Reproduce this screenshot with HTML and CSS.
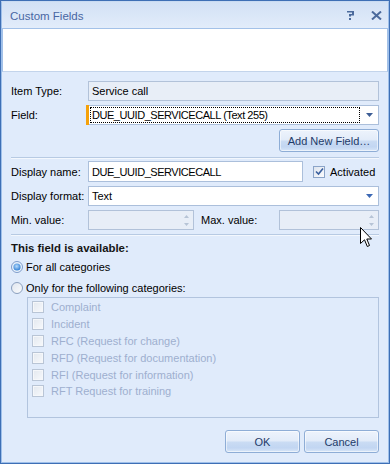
FILE: index.html
```html
<!DOCTYPE html>
<html>
<head>
<meta charset="utf-8">
<link rel="stylesheet" href="styles.css">
</head>
<body>
<div class="window">
  <div class="frame">
    <div class="titlebar">
      <span class="title">Custom Fields</span>
      <div class="title-icons">
        <svg class="help-ico" width="8" height="9" viewBox="0 0 8 9"><path fill="#4b6a9c" d="M0 0h7v1.5H0z M5 0h2v4H5z M2 3h5v1.5H2z M2 3h2v2.5H2z M2 7h2v2H2z"/></svg>
        <svg class="close-ico" width="11" height="9" viewBox="0 0 11 9"><path stroke="#4b6a9c" stroke-width="2" fill="none" d="M1 0.5 L10 8.5 M10 0.5 L1 8.5"/></svg>
      </div>
    </div>
    <div class="banner"></div>
    <div class="content">
      <div class="row">
        <span class="lbl">Item Type:</span>
        <div class="input disabled">Service call</div>
      </div>
      <div class="row gap4">
        <span class="lbl">Field:</span>
        <div class="combo field-combo">
          <span class="focus caps">DUE_UUID_SERVICECALL (Text 255)</span>
          <span class="drop"><svg width="7" height="4" viewBox="0 0 7 4"><path d="M0 0h7L3.5 4z" fill="#3d5d95"/></svg></span>
        </div>
      </div>
      <div class="btn-row">
        <button class="btn add-btn">Add New Field…</button>
      </div>
      <div class="sep sep1"></div>
      <div class="row dn-row">
        <span class="lbl">Display name:</span>
        <div class="input dn-input caps">DUE_UUID_SERVICECALL</div>
        <span class="check-lbl"><span class="cb checked"><svg width="9" height="9" viewBox="0 0 9 9"><path d="M1 4.5 L3.5 7 L8 1.5" stroke="#3a5f9e" stroke-width="1.6" fill="none"/></svg></span>Activated</span>
      </div>
      <div class="row gap4">
        <span class="lbl">Display format:</span>
        <div class="combo">
          <span class="combo-text">Text</span>
          <span class="drop"><svg width="7" height="4" viewBox="0 0 7 4"><path d="M0 0h7L3.5 4z" fill="#3c68b4"/></svg></span>
        </div>
      </div>
      <div class="row gap4">
        <span class="lbl">Min. value:</span>
        <div class="input disabled spin min-spin"><span class="spin-arrows"><svg width="5" height="11" viewBox="0 0 5 11"><path d="M0 3h5L2.5 0z M0 8h5L2.5 11z" fill="#b7c4d6"/></svg></span></div>
        <span class="max-lbl">Max. value:</span>
        <div class="input disabled spin max-spin"><span class="spin-arrows"><svg width="5" height="11" viewBox="0 0 5 11"><path d="M0 3h5L2.5 0z M0 8h5L2.5 11z" fill="#b7c4d6"/></svg></span></div>
      </div>
      <div class="sep sep2"></div>
      <div class="section-title">This field is available:</div>
      <div class="radio-row r1">
        <span class="radio"><svg width="12" height="12" viewBox="0 0 12 12"><defs><radialGradient id="rg" cx="0.45" cy="0.4" r="0.6"><stop offset="0" stop-color="#b9dcfb"/><stop offset="1" stop-color="#2f7fd6"/></radialGradient></defs><circle cx="6" cy="6" r="5.5" fill="#eaf2fb" stroke="#7e9ccb"/><circle cx="6" cy="6" r="3.6" fill="url(#rg)"/></svg></span>
        <span>For all categories</span>
      </div>
      <div class="radio-row r2">
        <span class="radio"><svg width="12" height="12" viewBox="0 0 12 12"><defs><linearGradient id="rg2" x1="0" y1="0" x2="1" y2="1"><stop offset="0" stop-color="#dfe5ee"/><stop offset="1" stop-color="#fbfcfe"/></linearGradient></defs><circle cx="6" cy="6" r="5.5" fill="url(#rg2)" stroke="#8a9fbe"/></svg></span>
        <span>Only for the following categories:</span>
      </div>
      <div class="group">
        <div class="gitem"><span class="cb dis"></span>Complaint</div>
        <div class="gitem"><span class="cb dis"></span>Incident</div>
        <div class="gitem"><span class="cb dis"></span>RFC (Request for change)</div>
        <div class="gitem"><span class="cb dis"></span>RFD (Request for documentation)</div>
        <div class="gitem"><span class="cb dis"></span>RFI (Request for information)</div>
        <div class="gitem"><span class="cb dis"></span>RFT Request for training</div>
      </div>
      <div class="footer">
        <button class="btn dlg-btn">OK</button>
        <button class="btn dlg-btn">Cancel</button>
      </div>
    </div>
  </div>
  <svg class="cursor" width="13" height="21" viewBox="0 0 13 21"><path d="M0.5 0.5 V16.5 L4.5 12.8 L7.3 19.5 L9.5 18.5 L6.8 12 H11.5 Z" fill="#fff" stroke="#000" stroke-width="1" stroke-linejoin="miter"/></svg>
</div>
</body>
</html>
```
FILE: styles.css
```css
html, body {
  margin: 0;
  padding: 0;
}
body {
  font-family: "Liberation Sans", Arial, sans-serif;
  font-size: 11px;
  color: #000;
  background: #e0ebfb;
}
.window {
  position: relative;
  width: 390px;
  height: 464px;
  box-sizing: border-box;
  border: 1px solid #3e6fb5;
  background: #e0ebfb;
  overflow: hidden;
}
.frame {
  box-sizing: border-box;
  height: 100%;
  border: 1px solid #9fc0ea;
  border-top-color: #c9dbf2;
  display: flex;
  flex-direction: column;
}
.titlebar {
  height: 26px;
  flex: none;
  display: flex;
  align-items: center;
  justify-content: space-between;
  padding: 0 6px 0 8px;
  background: linear-gradient(#d2e1f5, #e2ecfa);
}
.title {
  font-size: 11.5px;
  color: #4866a3;
  padding-top: 1px;
}
.title-icons {
  display: flex;
  align-items: center;
  gap: 16px;
  padding-top: 1px;
}
.title-icons svg { display: block; }
.banner {
  height: 44px;
  box-sizing: border-box;
  flex: none;
  background: #fff;
  border: 1px solid #a3c1e8;
  border-bottom-color: #c3d4eb;
}
.content {
  flex: 1;
  padding: 9px 9px 0 9px;
  display: flex;
  flex-direction: column;
}
.row {
  display: flex;
  align-items: center;
  height: 20px;
}
.gap4 { margin-top: 4px; }
.gap5 { margin-top: 5px; }
.lbl {
  width: 77px;
  flex: none;
}
.input {
  box-sizing: border-box;
  height: 20px;
  border: 1px solid #abbfdb;
  background: #fff;
  padding: 0 0 0 3px;
  display: flex;
  align-items: center;
  flex: 1;
}
.input.disabled {
  background: #e8eef7;
  border-color: #b2c2d9;
}
.caps { letter-spacing: -0.45px; }
.combo {
  position: relative;
  box-sizing: border-box;
  flex: 1;
  height: 20px;
  border: 1px solid #abbfdb;
  background: #fff;
  display: flex;
  align-items: center;
}
.field-combo::before {
  content: "";
  position: absolute;
  left: -3px;
  top: -1px;
  bottom: -1px;
  width: 3px;
  background: #f5a10a;
}
.focus {
  box-sizing: border-box;
  height: 16px;
  flex: 1;
  margin-left: 1px;
  border: 1px dotted #000;
  padding-left: 1px;
  display: flex;
  align-items: center;
  white-space: nowrap;
}
.combo-text {
  flex: 1;
  padding-left: 3px;
}
.drop {
  width: 18px;
  flex: none;
  display: flex;
  justify-content: center;
  align-items: center;
}
.drop svg { display: block; }
.btn-row {
  display: flex;
  justify-content: flex-end;
  margin-top: 4px;
}
.btn {
  font-family: "Liberation Sans", Arial, sans-serif;
  font-size: 11px;
  color: #1f3b69;
  box-sizing: border-box;
  height: 23px;
  border: 1px solid #8eadd6;
  border-radius: 3px;
  background: linear-gradient(#edf3fc 0%, #e3ecf9 45%, #c9dbf3 55%, #c2d6f2 80%, #d8e6f8 100%);
  box-shadow: inset 0 0 0 1px rgba(255,255,255,0.55);
  padding: 0;
  cursor: default;
}
.add-btn { width: 100px; }
.sep {
  height: 1px;
  background: #b7cae3;
  border-bottom: 1px solid #f3f7fd;
}
.sep1 { margin-top: 5px; }
.dn-row { margin-top: 2px; height: 21px; }
.dn-row .input { height: 21px; flex: none; width: 215px; }
.check-lbl {
  display: flex;
  align-items: center;
  margin-left: 10px;
  gap: 5px;
}
.cb {
  box-sizing: border-box;
  width: 12px;
  height: 12px;
  flex: none;
  display: inline-flex;
  align-items: center;
  justify-content: center;
}
.cb.checked {
  border: 1px solid #8ba4c8;
  background: linear-gradient(135deg, #dde4ee, #fbfcfe);
}
.cb svg { display: block; }
.cb.dis {
  border: 1px solid #b9c5d6;
  background: linear-gradient(135deg, #e3e8ef, #f7f9fc);
  box-shadow: inset 0 0 0 1px #f5f7fa;
}
.spin {
  flex: none;
  justify-content: flex-end;
  padding: 0 4px 0 0;
}
.min-spin { width: 106px; }
.max-lbl {
  width: 78px;
  flex: none;
  margin-left: 7px;
}
.max-spin { flex: 1; }
.spin-arrows svg { display: block; }
.sep2 { margin-top: 4px; }
.section-title {
  margin-top: 5px;
  height: 14px;
  line-height: 14px;
  font-weight: bold;
  font-size: 11.4px;
  color: #151515;
}
.radio-row {
  display: flex;
  align-items: center;
  height: 17px;
  gap: 3px;
  margin-top: 4px;
}
.radio-row.r1 { margin-top: 3px; }
.radio { width: 12px; height: 12px; flex: none; }
.radio svg { display: block; }
.group {
  margin: 1px 0 0 16px;
  height: 121px;
  box-sizing: border-box;
  border: 1px solid #b2c4de;
  padding: 1px 0 0 4px;
  display: flex;
  flex-direction: column;
}
.gitem {
  display: flex;
  align-items: center;
  height: 16.8px;
  gap: 7px;
  color: #9eafcf;
}
.footer {
  margin-top: 12px;
  display: flex;
  justify-content: flex-end;
  gap: 4px;
}
.dlg-btn { width: 75px; }
.cursor {
  position: absolute;
  left: 359px;
  top: 226px;
}
```
